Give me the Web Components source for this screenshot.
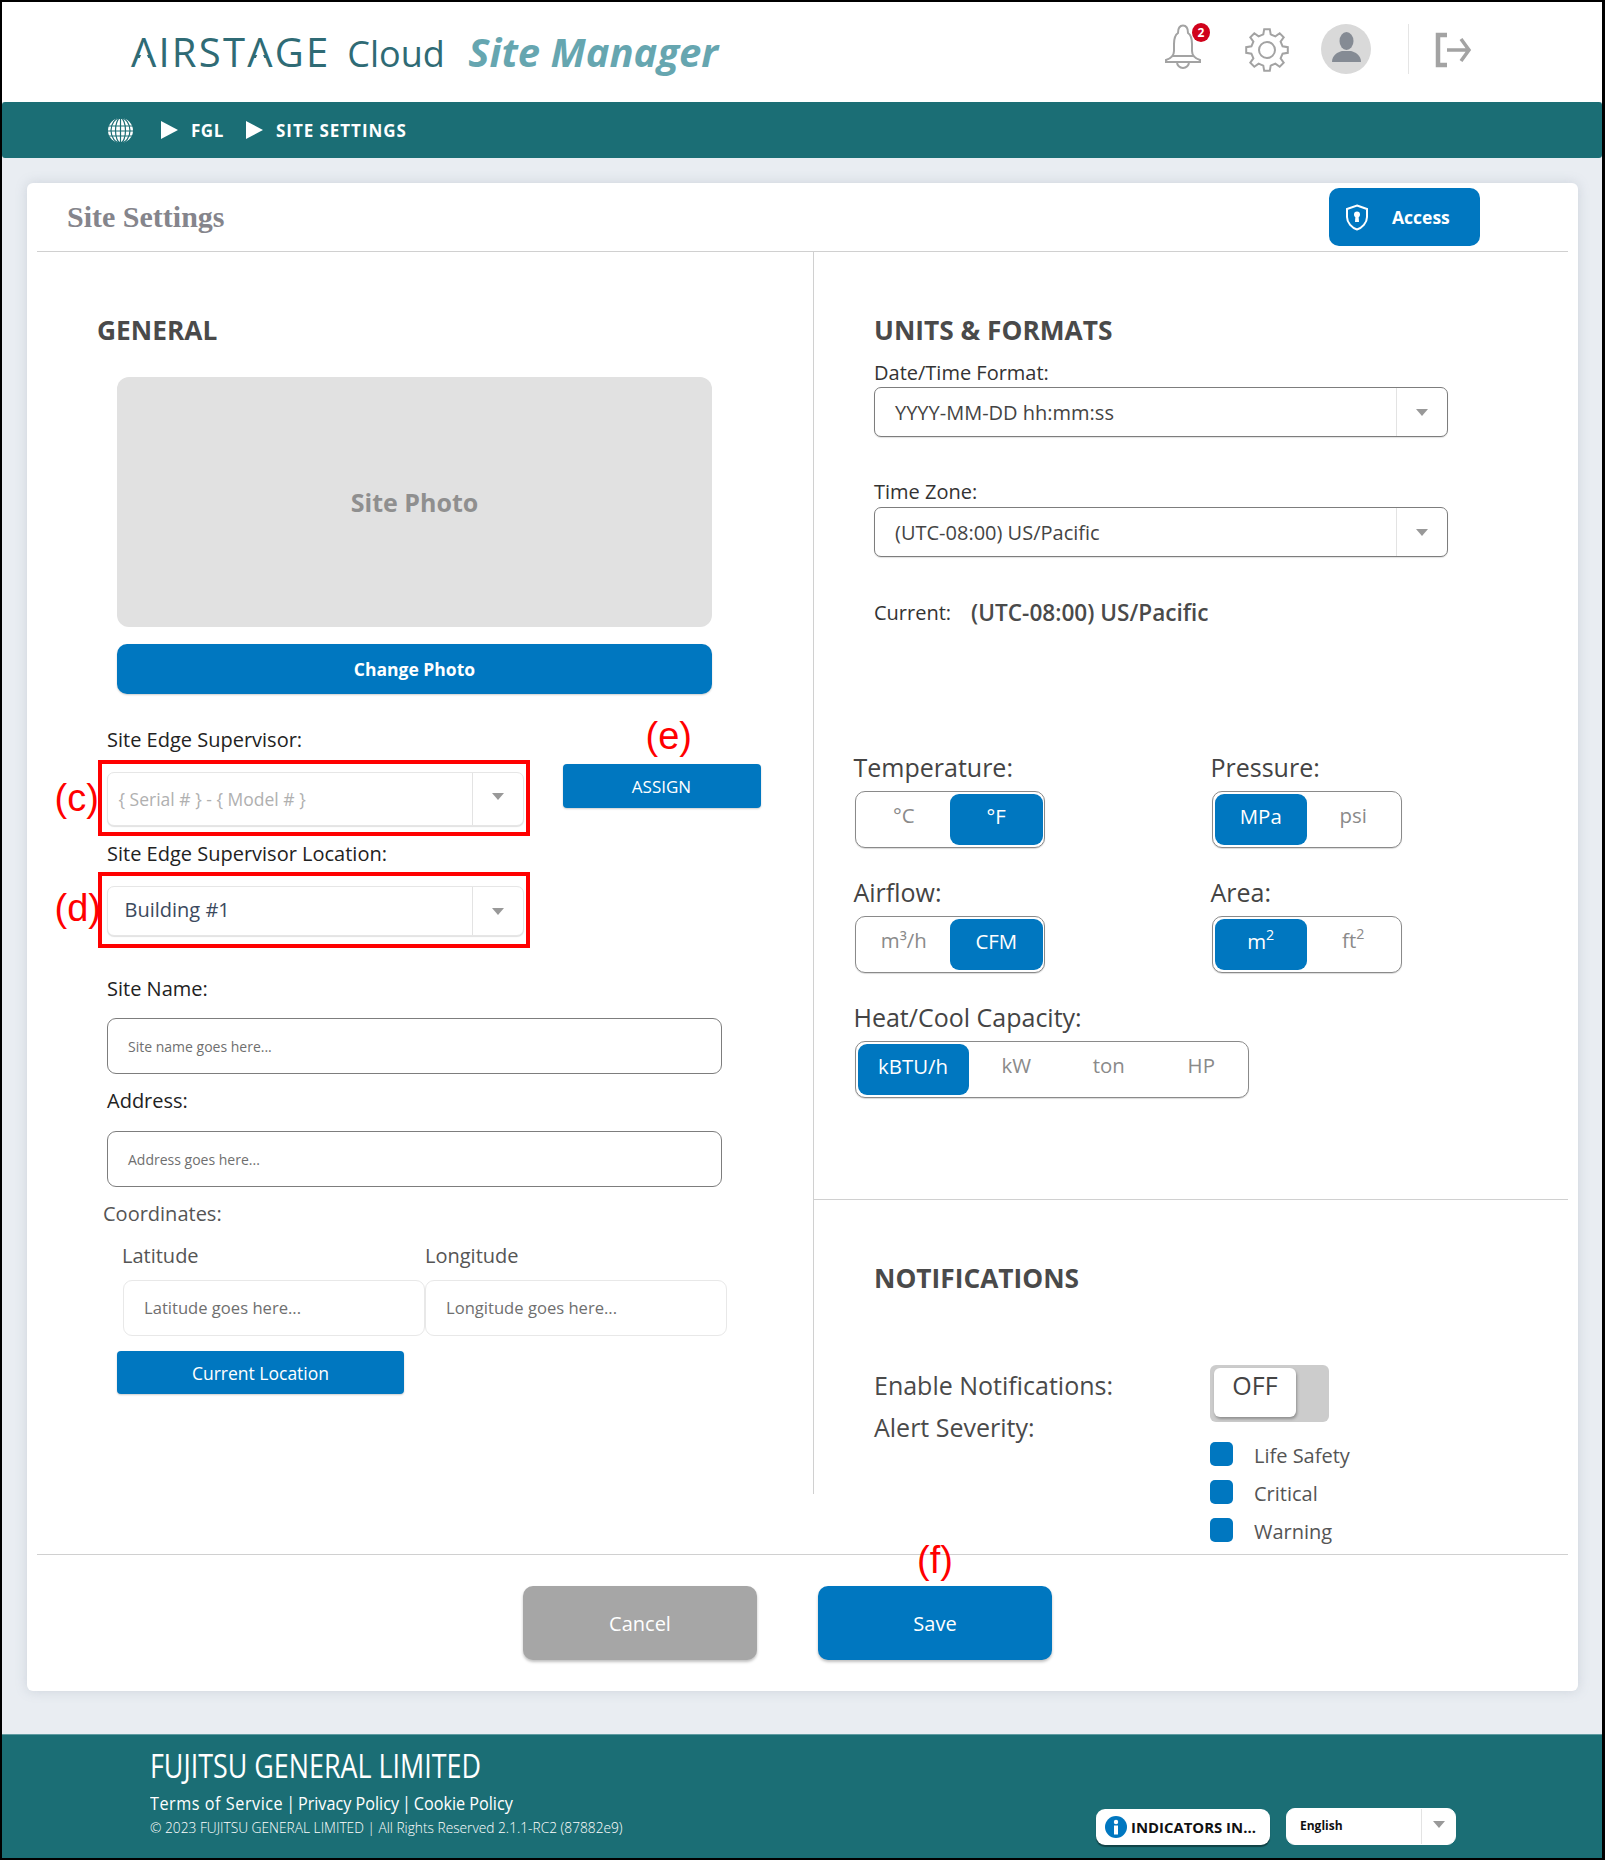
<!DOCTYPE html>
<html>
<head>
<meta charset="utf-8">
<title>Site Settings</title>
<style>
  html, body { margin: 0; padding: 0; background: #fff; }
  body { font-family: "Open Sans", "Liberation Sans", sans-serif; color: #333; }
</style>
</head>
<body>
<site-app>
  <site-header></site-header>
  <site-crumbs></site-crumbs>
  <settings-card></settings-card>
  <site-footer></site-footer>
</site-app>

<script>
// every element below: open shadow root, own style, markup set in the class
class Base extends HTMLElement {
  constructor() {
    super();
    this.attachShadow({ mode: 'open' });
    this.shadowRoot.innerHTML = `<style>${this.css()}</style>${this.html()}`;
  }
  css() { return ':host{display:block}'; }
  html() { return '<slot></slot>'; }
}

class SiteApp extends Base {
  css() { return `:host{display:flex;flex-direction:column;box-sizing:border-box;width:1605px;height:1860px;border:2px solid #000;border-right-width:3px;background:#e9edf2;overflow:hidden}`; }
}

function gearPath(cx, cy, ro, ri, n) {
  let d = '';
  const step = Math.PI * 2 / n;
  for (let i = 0; i < n; i++) {
    const a = i * step - Math.PI / 2;
    const pts = [[ri, a - step * .30], [ro, a - step * .17], [ro, a + step * .17], [ri, a + step * .30]];
    pts.forEach((p, j) => {
      const x = (cx + p[0] * Math.cos(p[1])).toFixed(1);
      const y = (cy + p[0] * Math.sin(p[1])).toFixed(1);
      d += (i === 0 && j === 0 ? 'M' : 'L') + x + ' ' + y;
    });
  }
  return d + 'Z';
}

class SiteHeader extends Base {
  css() { return `
    :host{display:flex;align-items:flex-start;height:100px;background:#fff;position:relative;flex:none}
    .logo{display:flex;align-items:baseline;margin:23px 0 0 129px;line-height:54px;white-space:nowrap}
    .air{font-size:40px;font-weight:400;color:#2f6b75;letter-spacing:2.200px}
    /* the logo's A has no crossbar: a white wedge sits over the bar */
    .lam{display:inline-block;position:relative}
    .lam::after{content:"";position:absolute;left:0;top:28px;width:26px;height:8px;background:#fff;clip-path:polygon(11px 0,15px 0,18.600px 8px,7.400px 8px)}
    .cloud{font-size:36px;font-weight:400;color:#2f6b75;margin-left:17px;width:96px}
    .sm{font-size:40px;font-weight:700;font-style:italic;color:#66a6b0;margin-left:25px}
    .icons{position:relative;margin:0 118px 0 auto;width:320px;height:100px}
    svg{position:absolute}
    .badge{position:absolute;left:28px;top:21px;width:18px;height:19px;border-radius:50%;background:#d0021b;color:#fff;font-size:12px;font-weight:700;text-align:center;line-height:19px}
    .sep{position:absolute;top:22px;width:1px;height:50px;background:#e5e5e5}
  `; }
  html() { return `
    <div class="logo"><span class="air"><span class="lam">A</span>IRST<span class="lam">A</span>GE</span><span class="cloud">Cloud</span><span class="sm">Site Manager</span></div>
    <div class="icons">
      <svg style="left:-1px;top:22px" width="40" height="46" viewBox="0 0 40 46" fill="none" stroke="#a3a3a3" stroke-width="2">
        <path d="M15 9C15 4 17 1.500 20 1.500S25 4 25 9C28 11 29 15 29 20V27C29 30 31 34 37 36V38H3V36C9 34 11 30 11 27V20C11 15 12 11 15 9Z"/>
        <path d="M10 32H30M14 38a6 6 0 0 0 12 0"/>
      </svg>
      <span class="badge">2</span>
      <svg id="gear" style="left:80px;top:25px" width="46" height="46" viewBox="0 0 46 46" fill="none" stroke="#a3a3a3" stroke-width="2">
        <path d="${gearPath(23, 23, 21, 16, 8)}"/><circle cx="23" cy="23" r="8"/>
      </svg>
      <svg style="left:157px;top:22px" width="50" height="50" viewBox="0 0 50 50">
        <ellipse cx="25" cy="25" rx="25" ry="25" fill="#d9d9d9"/>
        <ellipse cx="25.500" cy="17" rx="7" ry="9" fill="#858b94"/>
        <path d="M11 38C11 31 17 28 21 27H30C34 28 40 31 40 38Z" fill="#858b94"/>
      </svg>
      <span class="sep" style="left:244px"></span>
      <svg style="left:271px;top:30px" width="37" height="36" viewBox="0 0 37 36" fill="none" stroke="#a3a3a3" stroke-width="4.500">
        <path d="M12 3H3V33H12"/><path d="M12 18H33M26 7L34 18L26 29" stroke-width="3.500"/>
      </svg>
    </div>`; }
}

class SiteCrumbs extends Base {
  css() { return `
    :host{display:flex;align-items:center;height:56px;flex:none;background:#1b6e75;border-radius:3px;padding-left:106px;color:#fff;font-size:17px;font-weight:700;box-sizing:border-box}
    span{white-space:nowrap;display:inline-block;transform-origin:left}
    .tri{width:0;height:0;border-left:17px solid #fff;border-top:9.500px solid transparent;border-bottom:9.500px solid transparent}
  `; }
  html() { return `
    <svg width="25" height="25" viewBox="0 0 25 25" fill="none">
      <circle cx="12.500" cy="12.500" r="12.500" fill="#fff"/>
      <g stroke="#1b6e75" stroke-width="1.200"><path d="M0 8H25M0 13H25M0 18H25"/><ellipse cx="12.500" cy="12.500" rx="5" ry="12.500"/><ellipse cx="12.500" cy="12.500" rx="9.500" ry="12.500"/><path d="M12.500 0V25"/></g>
    </svg>
    <i class="tri" style="margin-left:28px"></i>
    <span style="margin-left:13px;width:55px;letter-spacing:.5px">FGL</span>
    <i class="tri"></i>
    <span style="margin-left:13px;letter-spacing:.95px">SITE SETTINGS</span>`; }
}

class SelectBox extends Base {
  css() { return `
    :host{display:flex;box-sizing:border-box;height:var(--h,50px);background:#fff;border:1px solid var(--bc,#e6e6e6);border-radius:var(--r,7px);box-shadow:var(--sh,0 1px 1px rgba(0,0,0,.12));align-items:stretch;color:var(--fg,#3c4a5e);font-size:var(--fs,20px);font-weight:var(--fw,400)}
    .v{flex:1;display:flex;align-items:center;padding:0 0 var(--tb,0) var(--pl,17px);white-space:nowrap;overflow:hidden}
    .a{width:var(--aw,50px);border-left:1px solid #e3e3e3;display:flex;align-items:center;justify-content:center;flex:none}
    i{width:0;height:0;border-left:6.500px solid transparent;border-right:6.500px solid transparent;border-top:7px solid #999;margin-top:var(--am,0)}
  `; }
  html() { return `<div class="v"><slot></slot></div><div class="a"><i></i></div>`; }
}

class TextBox extends Base {
  css() { return `
    :host{display:flex;align-items:center;box-sizing:border-box;height:56px;background:#fff;border:1px solid var(--bc,#7d7d7d);border-radius:9px;padding:0 0 var(--tb,0) 20px;color:#6f6f6f;font-size:var(--fs,14px);white-space:nowrap}
  `; }
}

class BlueButton extends Base {
  css() { return `
    :host{display:flex;align-items:center;justify-content:center;box-sizing:border-box;background:var(--bg,#0077c0);color:#fff;border-radius:var(--r,4px);height:var(--h,44px);font-size:var(--fs,18px);font-weight:var(--fw,400);box-shadow:0 1px 2px rgba(0,0,0,.2);white-space:nowrap;position:relative}
  `; }
}

class UnitToggle extends Base {
  css() { return `
    :host{display:inline-flex;box-sizing:border-box;height:57px;padding:2px 1.500px;border:1px solid #8a8a8a;border-radius:10px;background:#fff;font-size:20.400px;color:#8a8a8a;box-shadow:0 1px 1px rgba(0,0,0,.15)}
    b{font-weight:400;display:flex;align-items:center;justify-content:center;width:var(--w,92.500px);padding-bottom:10px;box-sizing:border-box;white-space:pre}
    b.on{background:#0077c0;color:#fff;border-radius:9px;padding-bottom:8px}
    :host([wide]) b:not(.on){padding-left:3px}
    sup{font-size:70%;line-height:0;vertical-align:baseline;position:relative;top:-.6em}
  `; }
  html() {
    const active = +this.getAttribute('active');
    return this.getAttribute('options').split('|').map((o, i) => {
      return `<b class="${i === active ? 'on' : ''}" style="${i === active && this.hasAttribute('wide') ? 'width:111px' : ''}"><span>${o}</span></b>`;
    }).join('');
  }
}

class AnnoBox extends Base {
  css() { return `
    :host{display:block;box-sizing:border-box;width:432px;height:76px;border:4px solid #f00;position:relative;padding:var(--pt,8px) 2px 0 5px}
    em{position:absolute;left:-47px;top:var(--lt,14px);font:normal 38px/40px "Liberation Sans",sans-serif;color:#f00}
  `; }
  html() { return `<em>${this.getAttribute('label')}</em><slot></slot>`; }
}

class SettingsCard extends Base {
  css() { return `
    :host{display:block;box-sizing:border-box;width:1551px;height:1508px;margin:25px 0 0 25px;background:#fff;border-radius:6px;box-shadow:0 0 12px rgba(120,130,150,.25);flex:none}
    header{display:flex;align-items:center;justify-content:space-between;height:68px;margin:0 10px;padding:0 88px 0 30px;border-bottom:1px solid #d0d0d0}
    h1{margin:0;font:700 30px/40px "Liberation Serif",serif;color:#85858c}
    .access{width:151px;--h:58px;--r:10px;--fs:17.500px;--fw:700;justify-content:flex-start;padding-left:16px;gap:23px;box-shadow:none}
    .body{display:flex;margin:0 10px;height:1302px;border-bottom:1px solid #d0d0d0}
    .left{box-sizing:border-box;width:777px;height:1242px;border-right:1px solid #d0d0d0;padding-left:60px;position:relative}
    .right{flex:1;display:flex;flex-direction:column}
    .units{box-sizing:border-box;height:948px;border-bottom:1px solid #d0d0d0;padding-left:60px}
    .notif{padding-left:60px}
    h2{margin:0;font-size:26.300px;font-weight:700;line-height:36px;color:#4a4a4a}
    .lbl{font-size:20px;line-height:28px;color:#222}
    .gray{color:#555}
    .photo{margin:29px 0 0 20px;width:595px;height:250px;background:#e1e1e1;border-radius:12px;display:flex;align-items:center;justify-content:center;font-size:25px;font-weight:700;color:#8f8f8f}
    .change{margin:17px 0 0 20px;width:595px;--h:50px;--r:10px;--fw:700;--fs:17.500px}
    .row{display:flex;align-items:flex-start;margin-left:.5px}
    .assign{width:198px;margin:4px 0 0 33px;--fs:17px}
    .assign em{position:absolute;left:83px;top:-48px;font:normal 38px/40px "Liberation Sans",sans-serif;color:#f00}
    text-box{width:615px;margin-left:10px}
    .coords{display:flex;margin:10px 0 0 26px}
    .coords text-box{margin:0;width:302px;height:56px;--bc:#e8e8e8;--fs:16.600px;--tb:2px}
    .pair{display:flex;margin:14px 0 0 25px}
    .pair div{width:303px;font-size:20px;line-height:28px;color:#555}
    .cur{width:287px;margin:15px 0 0 20px;--h:43px;--fs:17.500px}
    .units select-box{width:574px;--bc:#7d7d7d;--fg:#444;--fs:20px;--pl:20px}
    .d{font-size:20px;line-height:26px;color:#333}
    .now{display:flex;align-items:center;height:32px;margin-top:39px;font-size:20px;color:#333}
    .now b{font-weight:600;font-size:22.600px;margin-left:20px;color:#4a4a4a}
    .unit-grid{display:grid;grid-template-columns:357px auto;margin:123px 0 0 -20.500px;row-gap:28px;justify-content:start}
    .t{font-size:25px;line-height:32px;color:#444;margin-bottom:8px}
    .wrap{margin-left:1.500px}
    .note-row{display:grid;grid-template-columns:336px auto;margin-top:69px}
    .note-l{padding-top:4px;font-size:25px;line-height:32px;color:#4a4a4a}
    .note-l div+div{margin-top:10px}
    .sw{box-sizing:border-box;width:119px;height:57px;background:#ccc;border-radius:6px;padding:3px 4px}
    .sw span{display:flex;align-items:center;justify-content:center;width:82px;height:49px;background:#fff;border-radius:6px;box-shadow:1px 2px 3px rgba(0,0,0,.3);font-size:25px;color:#444;padding-bottom:16px;box-sizing:border-box}
    .checks{margin-top:20px;display:grid;row-gap:10px}
    .checks div{display:flex;font-size:20px;line-height:28px;color:#555;gap:21px}
    .checks i{width:23px;height:24px;border-radius:5px;background:#0077c0;flex:none}
    footer{display:flex;justify-content:center;gap:61px;padding:31px 30px 0 0;position:relative}
    footer blue-button{width:234px;--h:74px;--r:10px;--fs:20px;box-shadow:0 2px 3px rgba(0,0,0,.25)}
    .cancel{--bg:#a6a6a6}
    footer em{position:absolute;left:888px;top:-15px;width:40px;text-align:center;font:normal 38px/40px "Liberation Sans",sans-serif;color:#f00}
  `; }
  html() { return `
    <header>
      <h1>Site Settings</h1>
      <blue-button class="access">
        <svg width="24" height="27" viewBox="0 0 24 27"><path d="M12 1.500L22 5V13C22 19 17 24 12 25.500C7 24 2 19 2 13V5Z" fill="none" stroke="#fff" stroke-width="2"/><circle cx="12" cy="10.500" r="3" fill="#fff"/><path d="M10.500 11H13.500L14 18H10Z" fill="#fff"/></svg>
        <span>Access</span>
      </blue-button>
    </header>
    <div class="body">
      <section class="left">
        <h2 style="margin-top:60px">GENERAL</h2>
        <div class="photo">Site Photo</div>
        <blue-button class="change">Change Photo</blue-button>
        <div class="lbl" style="margin:32px 0 6px 10px">Site Edge Supervisor:</div>
        <div class="row">
          <anno-box label="(c)"><select-box style="--h:54px;--fg:#b0b0b0;--fs:17.500px;--pl:11px;--am:-5px">{ Serial # } - { Model # }</select-box></anno-box>
          <blue-button class="assign"><em>(e)</em>ASSIGN</blue-button>
        </div>
        <div class="lbl" style="margin:4px 0 4px 10px">Site Edge Supervisor Location:</div>
        <div class="row">
          <anno-box label="(d)" style="--pt:10px;--lt:12px"><select-box style="--tb:4px">Building #1</select-box></anno-box>
        </div>
        <div class="lbl" style="margin:27px 0 15px 10px">Site Name:</div>
        <text-box>Site name goes here...</text-box>
        <div class="lbl" style="margin:13px 0 16px 10px">Address:</div>
        <text-box>Address goes here...</text-box>
        <div class="lbl gray" style="margin:13px 0 0 6px">Coordinates:</div>
        <div class="pair"><div>Latitude</div><div>Longitude</div></div>
        <div class="coords"><text-box>Latitude goes here...</text-box><text-box>Longitude goes here...</text-box></div>
        <blue-button class="cur">Current Location</blue-button>
      </section>
      <section class="right">
        <div class="units">
          <h2 style="margin-top:60px">UNITS &amp; FORMATS</h2>
          <div class="d" style="margin-top:12px">Date/Time Format:</div>
          <select-box style="margin-top:1px">YYYY-MM-DD hh:mm:ss</select-box>
          <div class="d" style="margin-top:42px">Time Zone:</div>
          <select-box style="margin-top:2px">(UTC-08:00) US/Pacific</select-box>
          <div class="now">Current:<b>(UTC-08:00) US/Pacific</b></div>
          <div class="unit-grid">
            <div><div class="t">Temperature:</div><div class="wrap"><unit-toggle options="°C|°F" active="1"></unit-toggle></div></div>
            <div><div class="t">Pressure:</div><div class="wrap"><unit-toggle options="MPa|psi" active="0"></unit-toggle></div></div>
            <div><div class="t">Airflow:</div><div class="wrap"><unit-toggle options="m³/h|CFM" active="1"></unit-toggle></div></div>
            <div><div class="t">Area:</div><div class="wrap"><unit-toggle options="m<sup>2</sup>|ft<sup>2</sup>" active="0"></unit-toggle></div></div>
            <div style="grid-column:1 / 3"><div class="t">Heat/Cool Capacity:</div><div class="wrap"><unit-toggle wide options="kBTU/h|kW|ton|HP" active="0"></unit-toggle></div></div>
          </div>
        </div>
        <div class="notif">
          <h2 style="margin-top:60px">NOTIFICATIONS</h2>
          <div class="note-row">
            <div class="note-l"><div>Enable Notifications:</div><div>Alert Severity:</div></div>
            <div>
              <div class="sw"><span>OFF</span></div>
              <div class="checks">
                <div><i></i>Life Safety</div>
                <div><i></i>Critical</div>
                <div><i></i>Warning</div>
              </div>
            </div>
          </div>
        </div>
      </section>
    </div>
    <footer>
      <em>(f)</em>
      <blue-button class="cancel">Cancel</blue-button>
      <blue-button>Save</blue-button>
    </footer>`; }
}

class SiteFooter extends Base {
  css() { return `
    :host{display:flex;box-sizing:border-box;height:124px;margin-top:auto;flex:none;background:#1b6e75;border-top:1px solid #5f9ba1;color:#fff;padding-left:148px;position:relative}
    .t{margin-top:9px;font-size:32px;line-height:44px;white-space:nowrap;transform:scaleX(.84);transform-origin:left}
    .l{font-size:18px;line-height:26px;margin-top:2px;white-space:nowrap;transform:scaleX(.9);transform-origin:left}
    .l .s{margin:0 -1.500px}
    .c{font-size:15px;font-weight:300;line-height:22px;margin-top:0;white-space:nowrap;transform:scaleX(.915);transform-origin:left}
    .side{display:flex;align-items:flex-end;gap:16px;margin-left:auto;padding:0 146px 13px 0}
    .info{display:flex;align-items:center;gap:4px;box-sizing:border-box;width:174px;height:36px;background:#fff;border-radius:9px;box-shadow:0 2px 1px rgba(0,0,0,.4);padding-left:9px;color:#111;font-size:14.900px;font-weight:700;white-space:nowrap}
    select-box{width:170px;--h:37px;--r:9px;--aw:33px;--fg:#111;--fs:12px;--fw:700;--pl:13px;--am:-5px;--bc:#fff;--sh:none;--tb:2px}
  `; }
  html() { return `
    <div>
      <div class="t">FUJITSU GENERAL LIMITED</div>
      <div class="l"><span style="letter-spacing:.6px">Terms of Service</span> <span class="s">|</span> Privacy Policy <span class="s">|</span> Cookie Policy</div>
      <div class="c">© 2023 FUJITSU GENERAL LIMITED | All Rights Reserved 2.1.1-RC2 (87882e9)</div>
    </div>
    <div class="side">
      <div class="info"><svg width="22" height="22" viewBox="0 0 22 22"><circle cx="11" cy="11" r="11" fill="#0077c0"/><circle cx="11" cy="6" r="2.200" fill="#fff"/><rect x="9" y="9.500" width="4" height="9" fill="#fff"/></svg><span>INDICATORS IN...</span></div>
      <select-box>English</select-box>
    </div>`; }
}

customElements.define('site-app', SiteApp);
customElements.define('site-header', SiteHeader);
customElements.define('site-crumbs', SiteCrumbs);
customElements.define('select-box', SelectBox);
customElements.define('text-box', TextBox);
customElements.define('blue-button', BlueButton);
customElements.define('unit-toggle', UnitToggle);
customElements.define('anno-box', AnnoBox);
customElements.define('settings-card', SettingsCard);
customElements.define('site-footer', SiteFooter);
</script>
</body>
</html>
